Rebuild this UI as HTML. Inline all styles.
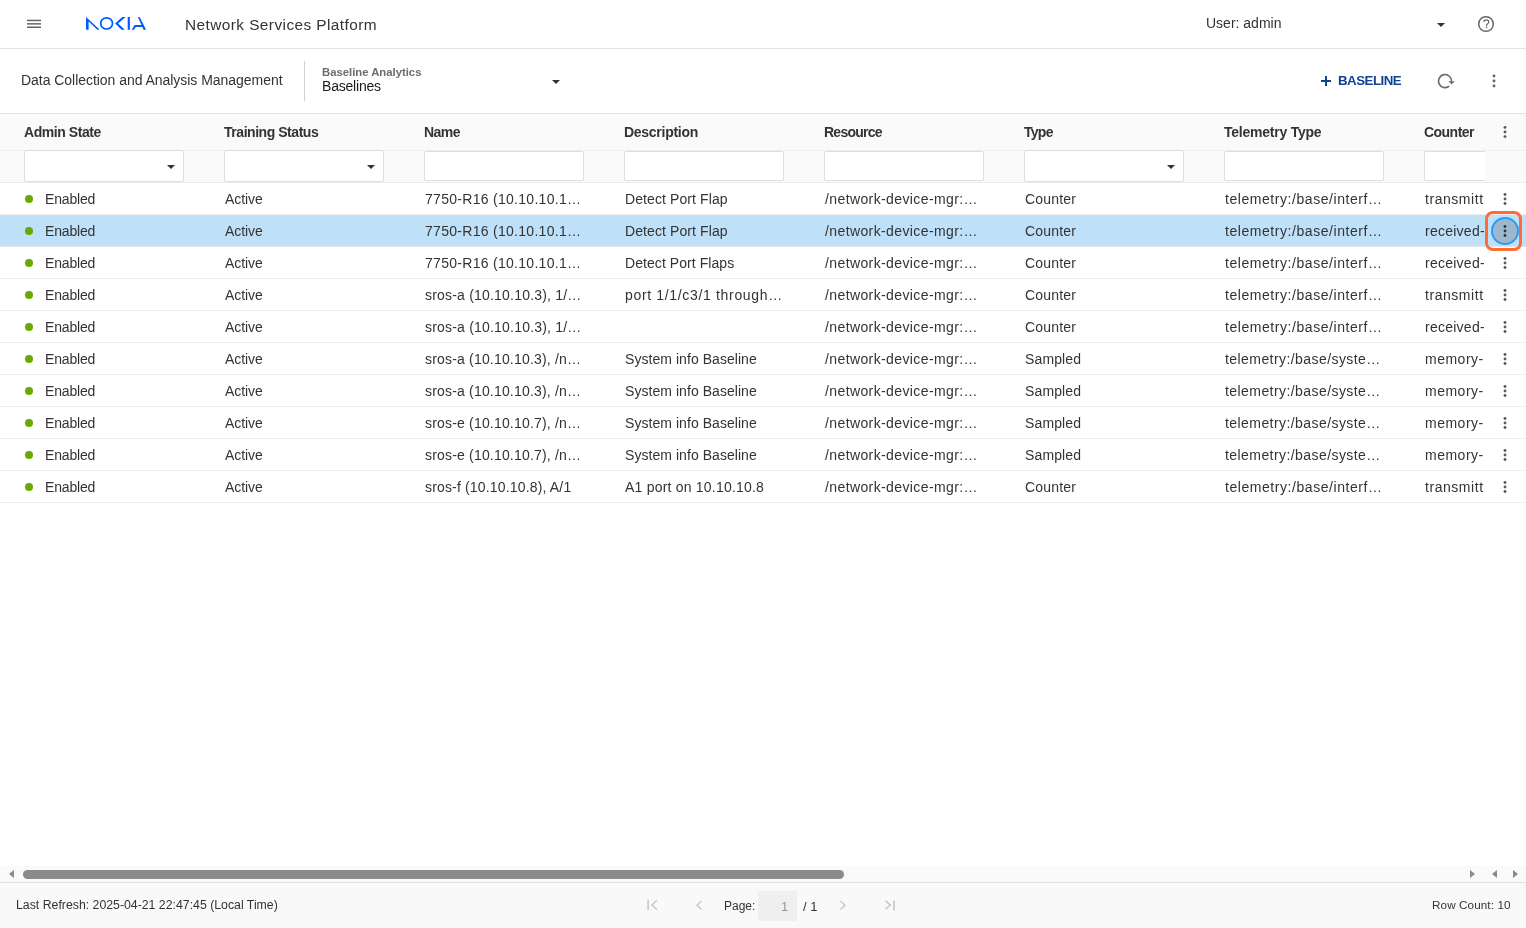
<!DOCTYPE html>
<html><head><meta charset="utf-8">
<style>
*{box-sizing:border-box;margin:0;padding:0}
html,body{width:1526px;height:928px;overflow:hidden;background:#fff;-webkit-font-smoothing:antialiased;font-family:"Liberation Sans",sans-serif;color:#333;}
.abs{position:absolute}
#top,#sub,#thead,#rows,#foot{will-change:transform}
#top{position:absolute;left:0;top:0;width:1526px;height:49px;border-bottom:1px solid #e2e2e2;background:#fff}
#sub{position:absolute;left:0;top:49px;width:1526px;height:65px;border-bottom:1px solid #e2e2e2;background:#fff}
#thead{position:absolute;left:0;top:114px;width:1526px;height:69px;background:#fafafa;border-bottom:1px solid #ececec}
#thead .sep{position:absolute;left:0;top:36px;width:1526px;height:1px;background:#f0f0f0}
.hd{position:absolute;top:10px;font-weight:bold;font-size:14px;color:#333;white-space:nowrap;line-height:16px}
.flt{position:absolute;top:36px;width:160px;height:32px;background:#fff;border:1px solid #dedede;border-radius:2px}
.flt .car{position:absolute;right:8px;top:14px;width:0;height:0;border-left:4px solid transparent;border-right:4px solid transparent;border-top:4px solid #333}
.row{position:absolute;left:0;width:1526px;height:32px;border-bottom:1px solid #efefef;background:#fff}
.row.sel{background:#bee0f9;border-bottom-color:#e6e6e6}
.c{position:absolute;top:1px;line-height:31px;font-size:14px;color:#333;white-space:nowrap;overflow:hidden}
.dot{position:absolute;left:25px;top:12px;width:8px;height:8px;border-radius:50%;background:#64ab02}
.keb{position:absolute;left:1503.6px;top:10px;width:3px;height:14px}
.keb i{position:absolute;left:0;width:2.8px;height:2.8px;border-radius:50%;background:#5a5a5a}
#hscroll{position:absolute;left:0;top:866px;width:1526px;height:16px;background:#fafafa}
#foot{position:absolute;left:0;top:882px;width:1526px;height:46px;background:#f9f9f9;border-top:1px solid #e0e0e0}
.tri{position:absolute;width:0;height:0}
</style></head><body>

<div id="top">
  <svg class="abs" style="left:26px;top:18px" width="16" height="12" viewBox="0 0 16 12"><rect x="1" y="1.7" width="14" height="1.5" fill="#666"/><rect x="1" y="5.1" width="14" height="1.5" fill="#666"/><rect x="1" y="8.5" width="14" height="1.5" fill="#666"/></svg>
  <svg class="abs" style="left:84px;top:15px" width="66" height="18" viewBox="84 15 66 18">
    <g fill="#005aff">
      <path d="M86 17 L99 29.0 V29.8 H97.4 L88.6 21.6 V29.8 H86 Z"/>
      <path d="M125.6 17 H122.3 L115.1 23.4 L121.6 29.8 H124.9 L118.1 23.4 Z"/>
      <rect x="127.7" y="17" width="2.2" height="12.8"/>
      <path d="M137.9 17 H139.6 L146.1 29.8 H143.5 Z"/>
      <path d="M134.6 25.1 H141.9 L142.9 27.0 H135.7 L134.1 29.8 H131.7 Z"/>
    </g>
    <ellipse cx="106.6" cy="23.4" rx="5.9" ry="5.6" fill="none" stroke="#005aff" stroke-width="1.7"/>
  </svg>
  <div class="abs" style="left:185px;top:16px;font-size:15.4px;line-height:18px;color:#333;letter-spacing:0.43px">Network Services Platform</div>
  <div class="abs" style="left:1206px;top:15px;font-size:14px;line-height:16px;color:#333">User: admin</div>
  <div class="tri" style="left:1437px;top:23px;border-left:4px solid transparent;border-right:4px solid transparent;border-top:4px solid #333"></div>
  <svg class="abs" style="left:1476px;top:14px" width="20" height="20" viewBox="0 0 20 20"><circle cx="10" cy="10" r="7.3" fill="none" stroke="#666" stroke-width="1.5"/><path d="M7.9 8.1 C7.9 6.6 8.9 5.9 10.3 5.9 C11.8 5.9 12.8 6.8 12.8 8.1 C12.8 9.7 10.6 9.9 10.5 11.5 V12.1" fill="none" stroke="#666" stroke-width="1.2"/><circle cx="10.5" cy="13.4" r="0.8" fill="#666"/></svg>
</div>

<div id="sub">
  <div class="abs" style="left:21px;top:23px;font-size:14px;line-height:16px;color:#333;letter-spacing:-0.04px">Data Collection and Analysis Management</div>
  <div class="abs" style="left:304px;top:12px;width:1px;height:40px;background:#d0d0d0"></div>
  <div class="abs" style="left:322px;top:16.5px;font-size:11.3px;font-weight:bold;line-height:12px;color:#6c6c6c">Baseline Analytics</div>
  <div class="abs" style="left:322px;top:29px;font-size:14px;line-height:16px;color:#1a1a1a;letter-spacing:-0.2px">Baselines</div>
  <div class="tri" style="left:552px;top:31px;border-left:4px solid transparent;border-right:4px solid transparent;border-top:4px solid #333"></div>
  <svg class="abs" style="left:1320px;top:26px" width="12" height="12" viewBox="0 0 12 12"><path d="M6 1V11M1 6H11" stroke="#124191" stroke-width="2"/></svg>
  <div class="abs" style="left:1338px;top:23.6px;font-size:13.3px;font-weight:bold;line-height:16px;color:#124191;letter-spacing:-0.5px">BASELINE</div>
  <svg class="abs" style="left:1435px;top:22px" width="22" height="20" viewBox="0 0 22 20"><path d="M14.2 15.1 A6.55 6.55 0 1 1 16.55 10.6" fill="none" stroke="#666" stroke-width="1.6"/><path d="M13.5 10.2 L19.8 10.2 L16.6 13.3Z" fill="#666"/></svg>
  <svg class="abs" style="left:1491.00px;top:23.90px" width="6" height="16" viewBox="0 0 6 16"><circle cx="3" cy="3.00" r="1.45" fill="#666"/><circle cx="3" cy="8" r="1.45" fill="#666"/><circle cx="3" cy="13.00" r="1.45" fill="#666"/></svg>
</div>

<div id="thead">
  <div class="sep"></div>
  <div class="hd" style="left:24px;letter-spacing:-0.440px">Admin State</div>
  <div class="hd" style="left:224px;letter-spacing:-0.458px">Training Status</div>
  <div class="hd" style="left:424px;letter-spacing:-0.534px">Name</div>
  <div class="hd" style="left:624px;letter-spacing:-0.280px">Description</div>
  <div class="hd" style="left:824px;letter-spacing:-0.742px">Resource</div>
  <div class="hd" style="left:1024px;letter-spacing:-0.733px">Type</div>
  <div class="hd" style="left:1224px;letter-spacing:-0.230px">Telemetry Type</div>
  <div class="hd" style="left:1424px;letter-spacing:-0.532px">Counter</div>
  <svg class="abs" style="left:1502.00px;top:10.00px" width="6" height="16" viewBox="0 0 6 16"><circle cx="3" cy="3.40" r="1.45" fill="#5a5a5a"/><circle cx="3" cy="8" r="1.45" fill="#5a5a5a"/><circle cx="3" cy="12.60" r="1.45" fill="#5a5a5a"/></svg>
  <div class="flt" style="left:24px"><span class="car"></span></div>
  <div class="flt" style="left:224px"><span class="car"></span></div>
  <div class="flt" style="left:424px;top:37px;height:30px"></div>
  <div class="flt" style="left:624px;top:37px;height:30px"></div>
  <div class="flt" style="left:824px;top:37px;height:30px"></div>
  <div class="flt" style="left:1024px"><span class="car"></span></div>
  <div class="flt" style="left:1224px;top:37px;height:30px"></div>
  <div class="flt" style="left:1424px;top:37px;height:30px;width:61px;border-right:none;border-radius:2px 0 0 2px"></div>
</div>

<div id="rows">
<div class="row" style="top:183px"><span class="dot"></span><span class="c" style="left:45px;letter-spacing:-0.167px">Enabled</span><span class="c" style="left:225px;letter-spacing:-0.080px">Active</span><span class="c" style="left:425px;letter-spacing:0.290px">7750-R16 (10.10.10.1…</span><span class="c" style="left:625px;letter-spacing:0.094px">Detect Port Flap</span><span class="c" style="left:825px;letter-spacing:0.390px">/network-device-mgr:…</span><span class="c" style="left:1025px;letter-spacing:0.167px">Counter</span><span class="c" style="left:1225px;letter-spacing:0.555px">telemetry:/base/interf…</span><span class="c" style="left:1425px;letter-spacing:0.550px;width:59px">transmitt</span><svg class="abs" style="left:1502px;top:8px" width="6" height="16" viewBox="0 0 6 16"><circle cx="3" cy="3.5" r="1.45" fill="#5a5a5a"/><circle cx="3" cy="8" r="1.45" fill="#5a5a5a"/><circle cx="3" cy="12.5" r="1.45" fill="#5a5a5a"/></svg></div>
<div class="row sel" style="top:215px"><span class="dot"></span><span class="c" style="left:45px;letter-spacing:-0.167px">Enabled</span><span class="c" style="left:225px;letter-spacing:-0.080px">Active</span><span class="c" style="left:425px;letter-spacing:0.290px">7750-R16 (10.10.10.1…</span><span class="c" style="left:625px;letter-spacing:0.094px">Detect Port Flap</span><span class="c" style="left:825px;letter-spacing:0.390px">/network-device-mgr:…</span><span class="c" style="left:1025px;letter-spacing:0.167px">Counter</span><span class="c" style="left:1225px;letter-spacing:0.555px">telemetry:/base/interf…</span><span class="c" style="left:1425px;letter-spacing:0.250px;width:59px">received-</span><svg class="abs" style="left:1502px;top:8px" width="6" height="16" viewBox="0 0 6 16"><circle cx="3" cy="3.5" r="1.45" fill="#5a5a5a"/><circle cx="3" cy="8" r="1.45" fill="#5a5a5a"/><circle cx="3" cy="12.5" r="1.45" fill="#5a5a5a"/></svg></div>
<div class="row" style="top:247px"><span class="dot"></span><span class="c" style="left:45px;letter-spacing:-0.167px">Enabled</span><span class="c" style="left:225px;letter-spacing:-0.080px">Active</span><span class="c" style="left:425px;letter-spacing:0.290px">7750-R16 (10.10.10.1…</span><span class="c" style="left:625px;letter-spacing:0.063px">Detect Port Flaps</span><span class="c" style="left:825px;letter-spacing:0.390px">/network-device-mgr:…</span><span class="c" style="left:1025px;letter-spacing:0.167px">Counter</span><span class="c" style="left:1225px;letter-spacing:0.555px">telemetry:/base/interf…</span><span class="c" style="left:1425px;letter-spacing:0.250px;width:59px">received-</span><svg class="abs" style="left:1502px;top:8px" width="6" height="16" viewBox="0 0 6 16"><circle cx="3" cy="3.5" r="1.45" fill="#5a5a5a"/><circle cx="3" cy="8" r="1.45" fill="#5a5a5a"/><circle cx="3" cy="12.5" r="1.45" fill="#5a5a5a"/></svg></div>
<div class="row" style="top:279px"><span class="dot"></span><span class="c" style="left:45px;letter-spacing:-0.167px">Enabled</span><span class="c" style="left:225px;letter-spacing:-0.080px">Active</span><span class="c" style="left:425px;letter-spacing:0.199px">sros-a (10.10.10.3), 1/…</span><span class="c" style="left:625px;letter-spacing:0.667px">port 1/1/c3/1 through…</span><span class="c" style="left:825px;letter-spacing:0.390px">/network-device-mgr:…</span><span class="c" style="left:1025px;letter-spacing:0.167px">Counter</span><span class="c" style="left:1225px;letter-spacing:0.555px">telemetry:/base/interf…</span><span class="c" style="left:1425px;letter-spacing:0.550px;width:59px">transmitt</span><svg class="abs" style="left:1502px;top:8px" width="6" height="16" viewBox="0 0 6 16"><circle cx="3" cy="3.5" r="1.45" fill="#5a5a5a"/><circle cx="3" cy="8" r="1.45" fill="#5a5a5a"/><circle cx="3" cy="12.5" r="1.45" fill="#5a5a5a"/></svg></div>
<div class="row" style="top:311px"><span class="dot"></span><span class="c" style="left:45px;letter-spacing:-0.167px">Enabled</span><span class="c" style="left:225px;letter-spacing:-0.080px">Active</span><span class="c" style="left:425px;letter-spacing:0.199px">sros-a (10.10.10.3), 1/…</span><span class="c" style="left:625px"></span><span class="c" style="left:825px;letter-spacing:0.390px">/network-device-mgr:…</span><span class="c" style="left:1025px;letter-spacing:0.167px">Counter</span><span class="c" style="left:1225px;letter-spacing:0.555px">telemetry:/base/interf…</span><span class="c" style="left:1425px;letter-spacing:0.250px;width:59px">received-</span><svg class="abs" style="left:1502px;top:8px" width="6" height="16" viewBox="0 0 6 16"><circle cx="3" cy="3.5" r="1.45" fill="#5a5a5a"/><circle cx="3" cy="8" r="1.45" fill="#5a5a5a"/><circle cx="3" cy="12.5" r="1.45" fill="#5a5a5a"/></svg></div>
<div class="row" style="top:343px"><span class="dot"></span><span class="c" style="left:45px;letter-spacing:-0.167px">Enabled</span><span class="c" style="left:225px;letter-spacing:-0.080px">Active</span><span class="c" style="left:425px;letter-spacing:0.184px">sros-a (10.10.10.3), /n…</span><span class="c" style="left:625px;letter-spacing:0.053px">System info Baseline</span><span class="c" style="left:825px;letter-spacing:0.390px">/network-device-mgr:…</span><span class="c" style="left:1025px;letter-spacing:0.133px">Sampled</span><span class="c" style="left:1225px;letter-spacing:0.429px">telemetry:/base/syste…</span><span class="c" style="left:1425px;letter-spacing:0.501px;width:59px">memory-</span><svg class="abs" style="left:1502px;top:8px" width="6" height="16" viewBox="0 0 6 16"><circle cx="3" cy="3.5" r="1.45" fill="#5a5a5a"/><circle cx="3" cy="8" r="1.45" fill="#5a5a5a"/><circle cx="3" cy="12.5" r="1.45" fill="#5a5a5a"/></svg></div>
<div class="row" style="top:375px"><span class="dot"></span><span class="c" style="left:45px;letter-spacing:-0.167px">Enabled</span><span class="c" style="left:225px;letter-spacing:-0.080px">Active</span><span class="c" style="left:425px;letter-spacing:0.184px">sros-a (10.10.10.3), /n…</span><span class="c" style="left:625px;letter-spacing:0.053px">System info Baseline</span><span class="c" style="left:825px;letter-spacing:0.390px">/network-device-mgr:…</span><span class="c" style="left:1025px;letter-spacing:0.133px">Sampled</span><span class="c" style="left:1225px;letter-spacing:0.429px">telemetry:/base/syste…</span><span class="c" style="left:1425px;letter-spacing:0.501px;width:59px">memory-</span><svg class="abs" style="left:1502px;top:8px" width="6" height="16" viewBox="0 0 6 16"><circle cx="3" cy="3.5" r="1.45" fill="#5a5a5a"/><circle cx="3" cy="8" r="1.45" fill="#5a5a5a"/><circle cx="3" cy="12.5" r="1.45" fill="#5a5a5a"/></svg></div>
<div class="row" style="top:407px"><span class="dot"></span><span class="c" style="left:45px;letter-spacing:-0.167px">Enabled</span><span class="c" style="left:225px;letter-spacing:-0.080px">Active</span><span class="c" style="left:425px;letter-spacing:0.184px">sros-e (10.10.10.7), /n…</span><span class="c" style="left:625px;letter-spacing:0.053px">System info Baseline</span><span class="c" style="left:825px;letter-spacing:0.390px">/network-device-mgr:…</span><span class="c" style="left:1025px;letter-spacing:0.133px">Sampled</span><span class="c" style="left:1225px;letter-spacing:0.429px">telemetry:/base/syste…</span><span class="c" style="left:1425px;letter-spacing:0.501px;width:59px">memory-</span><svg class="abs" style="left:1502px;top:8px" width="6" height="16" viewBox="0 0 6 16"><circle cx="3" cy="3.5" r="1.45" fill="#5a5a5a"/><circle cx="3" cy="8" r="1.45" fill="#5a5a5a"/><circle cx="3" cy="12.5" r="1.45" fill="#5a5a5a"/></svg></div>
<div class="row" style="top:439px"><span class="dot"></span><span class="c" style="left:45px;letter-spacing:-0.167px">Enabled</span><span class="c" style="left:225px;letter-spacing:-0.080px">Active</span><span class="c" style="left:425px;letter-spacing:0.184px">sros-e (10.10.10.7), /n…</span><span class="c" style="left:625px;letter-spacing:0.053px">System info Baseline</span><span class="c" style="left:825px;letter-spacing:0.390px">/network-device-mgr:…</span><span class="c" style="left:1025px;letter-spacing:0.133px">Sampled</span><span class="c" style="left:1225px;letter-spacing:0.429px">telemetry:/base/syste…</span><span class="c" style="left:1425px;letter-spacing:0.501px;width:59px">memory-</span><svg class="abs" style="left:1502px;top:8px" width="6" height="16" viewBox="0 0 6 16"><circle cx="3" cy="3.5" r="1.45" fill="#5a5a5a"/><circle cx="3" cy="8" r="1.45" fill="#5a5a5a"/><circle cx="3" cy="12.5" r="1.45" fill="#5a5a5a"/></svg></div>
<div class="row" style="top:471px"><span class="dot"></span><span class="c" style="left:45px;letter-spacing:-0.167px">Enabled</span><span class="c" style="left:225px;letter-spacing:-0.080px">Active</span><span class="c" style="left:425px;letter-spacing:0.164px">sros-f (10.10.10.8), A/1</span><span class="c" style="left:625px;letter-spacing:0.210px">A1 port on 10.10.10.8</span><span class="c" style="left:825px;letter-spacing:0.390px">/network-device-mgr:…</span><span class="c" style="left:1025px;letter-spacing:0.167px">Counter</span><span class="c" style="left:1225px;letter-spacing:0.555px">telemetry:/base/interf…</span><span class="c" style="left:1425px;letter-spacing:0.550px;width:59px">transmitt</span><svg class="abs" style="left:1502px;top:8px" width="6" height="16" viewBox="0 0 6 16"><circle cx="3" cy="3.5" r="1.45" fill="#5a5a5a"/><circle cx="3" cy="8" r="1.45" fill="#5a5a5a"/><circle cx="3" cy="12.5" r="1.45" fill="#5a5a5a"/></svg></div>
</div>

<!-- highlight on selected row kebab -->
<div class="abs" style="left:1485.3px;top:211px;width:36.5px;height:40px;border:3px solid #ff6b38;border-radius:8px"></div>
<div class="abs" style="left:1491px;top:217px;width:28px;height:28px;border:2px solid #2e9cf3;border-radius:50%;background:#9db8cd"></div>
<svg class="abs" style="left:1502.00px;top:223.00px" width="6" height="16" viewBox="0 0 6 16"><circle cx="3" cy="3.50" r="1.4" fill="#333"/><circle cx="3" cy="8" r="1.4" fill="#333"/><circle cx="3" cy="12.50" r="1.4" fill="#333"/></svg>

<div id="hscroll">
  <div class="tri" style="left:9px;top:4px;border-top:4.5px solid transparent;border-bottom:4.5px solid transparent;border-right:5px solid #8a8a8a"></div>
  <div class="abs" style="left:22.5px;top:4px;width:821.5px;height:9px;border-radius:4.5px;background:#8a8a8a"></div>
  <div class="tri" style="left:1470px;top:4px;border-top:4.5px solid transparent;border-bottom:4.5px solid transparent;border-left:5px solid #8a8a8a"></div>
  <div class="tri" style="left:1492px;top:4px;border-top:4.5px solid transparent;border-bottom:4.5px solid transparent;border-right:5px solid #8a8a8a"></div>
  <div class="tri" style="left:1513px;top:4px;border-top:4.5px solid transparent;border-bottom:4.5px solid transparent;border-left:5px solid #8a8a8a"></div>
</div>

<div id="foot">
  <div class="abs" style="left:16px;top:15px;font-size:12.3px;line-height:15px;color:#333">Last Refresh: 2025-04-21 22:47:45 (Local Time)</div>
  <svg class="abs" style="left:644px;top:15px" width="16" height="14" viewBox="0 0 16 14"><path d="M4.1 1.8V12.2" stroke="#c6c6c6" stroke-width="1.5"/><path d="M12.9 2.3L7.8 7.0L12.9 11.6" fill="none" stroke="#c6c6c6" stroke-width="1.3"/></svg>
  <svg class="abs" style="left:692px;top:15px" width="12" height="14" viewBox="0 0 12 14"><path d="M9.5 3L5 7.25L9.5 11.5" fill="none" stroke="#c6c6c6" stroke-width="1.3"/></svg>
  <div class="abs" style="left:724px;top:16px;font-size:12px;line-height:15px;color:#333">Page:</div>
  <div class="abs" style="left:758px;top:8px;width:39px;height:30px;background:#efefef"></div>
  <div class="abs" style="left:781px;top:16px;font-size:13px;line-height:15px;color:#999">1</div>
  <div class="abs" style="left:803px;top:16px;font-size:13px;line-height:15px;color:#333">/ 1</div>
  <svg class="abs" style="left:837px;top:15px" width="12" height="14" viewBox="0 0 12 14"><path d="M3.5 3L8 7.25L3.5 11.5" fill="none" stroke="#c6c6c6" stroke-width="1.3"/></svg>
  <svg class="abs" style="left:882px;top:15px" width="16" height="14" viewBox="0 0 16 14"><path d="M3.6 2.9L8.4 7.1L3.6 11.3" fill="none" stroke="#c6c6c6" stroke-width="1.4"/><path d="M12.0 2.4V12.4" stroke="#c6c6c6" stroke-width="1.6"/></svg>
  <div class="abs" style="left:1432px;top:15px;font-size:11.7px;letter-spacing:0.1px;line-height:14px;color:#333">Row Count: 10</div>
</div>

</body></html>
